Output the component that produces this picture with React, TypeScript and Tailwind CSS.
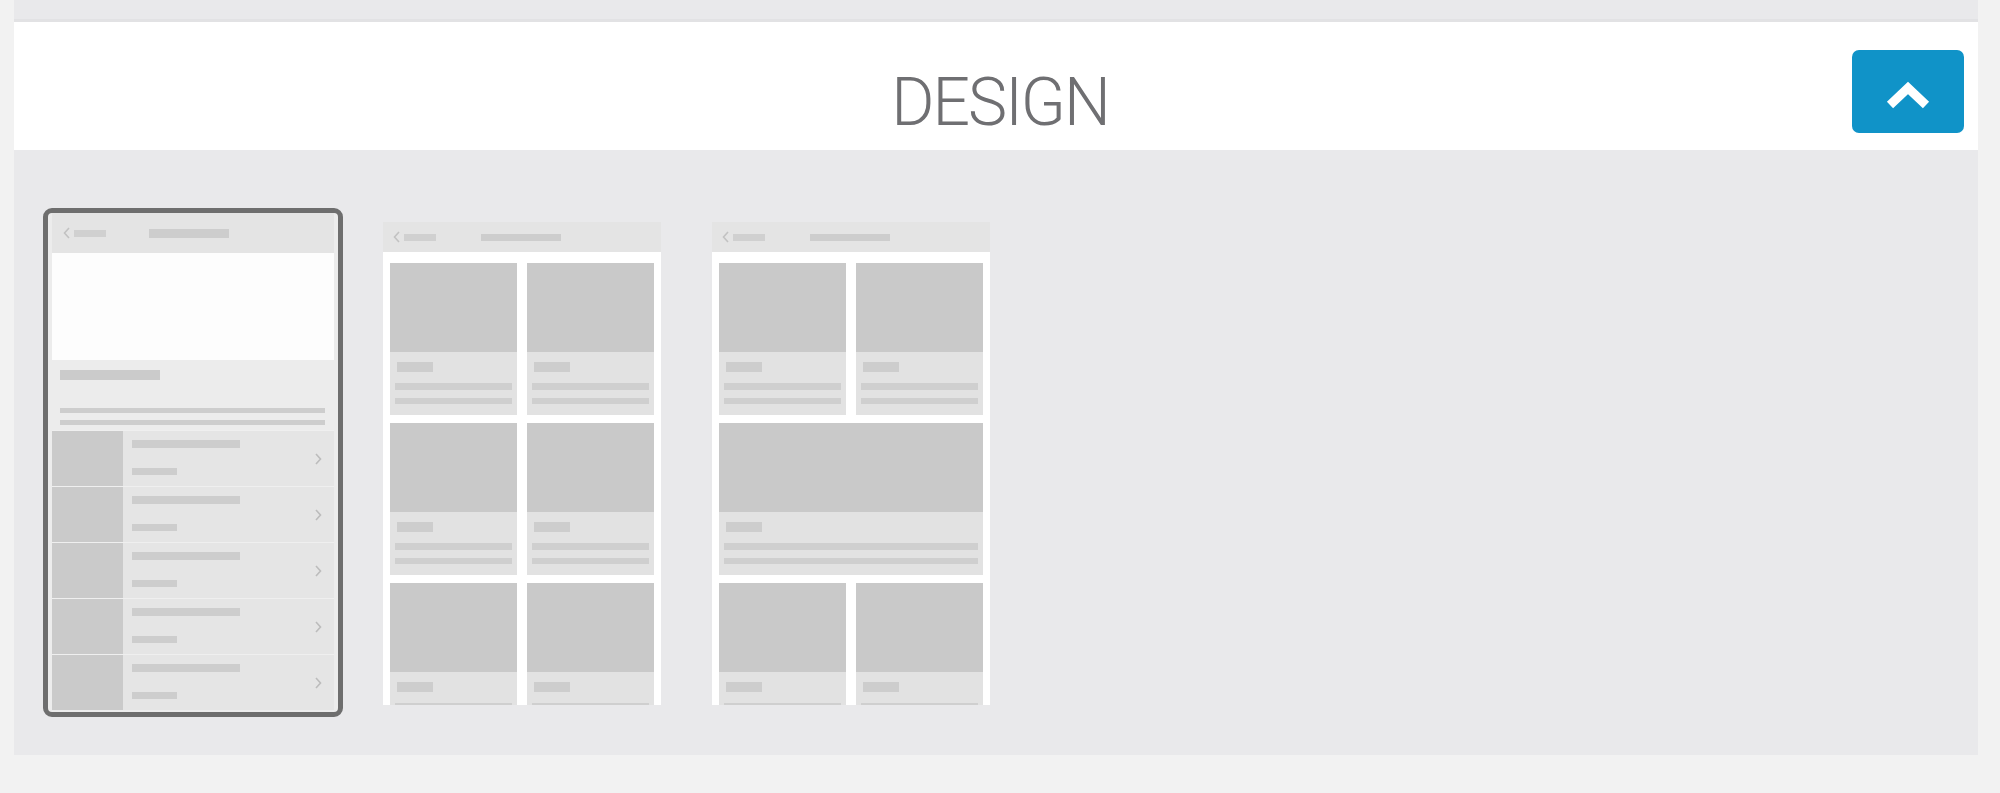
import React from "react"

function BackChevron() {
  return (
    <svg width="7" height="12" viewBox="0 0 7 12" className="shrink-0">
      <polyline points="6,1 1.5,6 6,11" fill="none" stroke="#c2c2c2" strokeWidth="1.6" />
    </svg>
  )
}

function RowChevron() {
  return (
    <svg width="7" height="12" viewBox="0 0 7 12" className="shrink-0">
      <polyline points="1,1 5.5,6 1,11" fill="none" stroke="#bcbcbc" strokeWidth="1.6" />
    </svg>
  )
}

type MiniHeaderProps = {
  tall?: boolean,
}

function MiniHeader({ tall = false }: MiniHeaderProps) {
  return (
    <div className={`${tall ? "h-[40px] pl-[11px]" : "h-[30px] pl-[10px]"} shrink-0 bg-[#e4e4e4] flex items-center`}>
      <BackChevron />
      <div className="ml-[4px] w-[32px] h-[7px] bg-[#d0d0d0]" />
      <div className={`${tall ? "ml-[43px] h-[9px]" : "ml-[45px] h-[7px]"} w-[80px] bg-[#cdcdcd]`} />
    </div>
  )
}

function ListRow() {
  return (
    <div className="h-[56px] flex bg-[#e5e5e5] border-t border-[#efefef]">
      <div className="w-[71px] bg-[#cacaca]" />
      <div className="flex flex-col pl-[9px] pt-[9px]">
        <div className="w-[108px] h-[8px] bg-[#cdcdcd]" />
        <div className="mt-[20px] w-[45px] h-[7px] bg-[#cdcdcd]" />
      </div>
      <div className="ml-auto mr-[12px] self-center">
        <RowChevron />
      </div>
    </div>
  )
}

function SelectedThumb() {
  return (
    <div className="w-[300px] h-[509px] shrink-0 border-[5px] border-[#6e6e6e] rounded-[9px] bg-[#ececec] overflow-hidden flex flex-col px-[4px]">
      <MiniHeader tall />
      <div className="h-[107px] shrink-0 bg-[#fdfdfd]" />
      <div className="h-[70px] shrink-0 flex flex-col px-[8px]">
        <div className="mt-[10px] w-[100px] h-[10px] bg-[#cbcbcb]" />
        <div className="mt-[28px] w-[265px] h-[5px] bg-[#cdcdcd]" />
        <div className="mt-[7px] w-[265px] h-[5px] bg-[#cdcdcd]" />
      </div>
      {[0, 1, 2, 3, 4].map((i) => (
        <ListRow key={i} />
      ))}
    </div>
  )
}

type TileProps = {
  wide?: boolean,
}

function Tile({ wide = false }: TileProps) {
  return (
    <div className={`${wide ? "col-span-2" : ""} h-[152px] flex flex-col bg-[#e2e2e2]`}>
      <div className="h-[89px] shrink-0 bg-[#c9c9c9]" />
      <div className="mt-[10px] ml-[7px] w-[36px] h-[10px] bg-[#cdcdcd]" />
      <div className="mt-[11px] mx-[5px] h-[7px] bg-[#cfcfcf]" />
      <div className="mt-[8px] mx-[5px] h-[6px] bg-[#cfcfcf]" />
    </div>
  )
}

type GridThumbProps = {
  wideMiddle?: boolean,
}

function GridThumb({ wideMiddle = false }: GridThumbProps) {
  return (
    <div className="w-[278px] h-[483px] shrink-0 mt-[14px] flex flex-col">
      <MiniHeader />
      <div className="flex-1 bg-white overflow-hidden px-[7px] pt-[11px] grid grid-cols-2 gap-x-[10px] gap-y-[8px] content-start">
        <Tile />
        <Tile />
        {wideMiddle ? (
          <Tile wide />
        ) : (
          <>
            <Tile />
            <Tile />
          </>
        )}
        <Tile />
        <Tile />
      </div>
    </div>
  )
}

export default function App() {
  return (
    <div className="w-full h-[793px] bg-[#f2f2f2] overflow-hidden pl-[14px] pr-[22px]">
      <div className="h-[19px] bg-[#e9e9eb]" />
      <div className="h-[3px] bg-[#e2e2e4]" />
      <div className="relative h-[128px] bg-white flex justify-center">
        <h2 className="pt-[48px] ml-[8px] text-[66px] leading-none font-light text-[#6f6f72] tracking-[-2px]" style={{ fontFamily: "Roboto, 'Open Sans', sans-serif" }}>
          DESIGN
        </h2>
        <button className="absolute right-[14px] top-[28px] w-[112px] h-[83px] rounded-[7px] bg-[#1093c8] flex items-center justify-center">
          <svg width="46" height="30" viewBox="0 0 46 30" className="mt-[6px]">
            <polyline points="5,25 23,8 41,25" fill="none" stroke="white" strokeWidth="9" strokeLinejoin="miter" />
          </svg>
        </button>
      </div>
      <div className="h-[605px] bg-[#e9e9eb] flex items-start pt-[58px] pl-[29px]">
        <SelectedThumb />
        <div className="ml-[40px]">
          <GridThumb />
        </div>
        <div className="ml-[51px]">
          <GridThumb wideMiddle />
        </div>
      </div>
    </div>
  )
}
